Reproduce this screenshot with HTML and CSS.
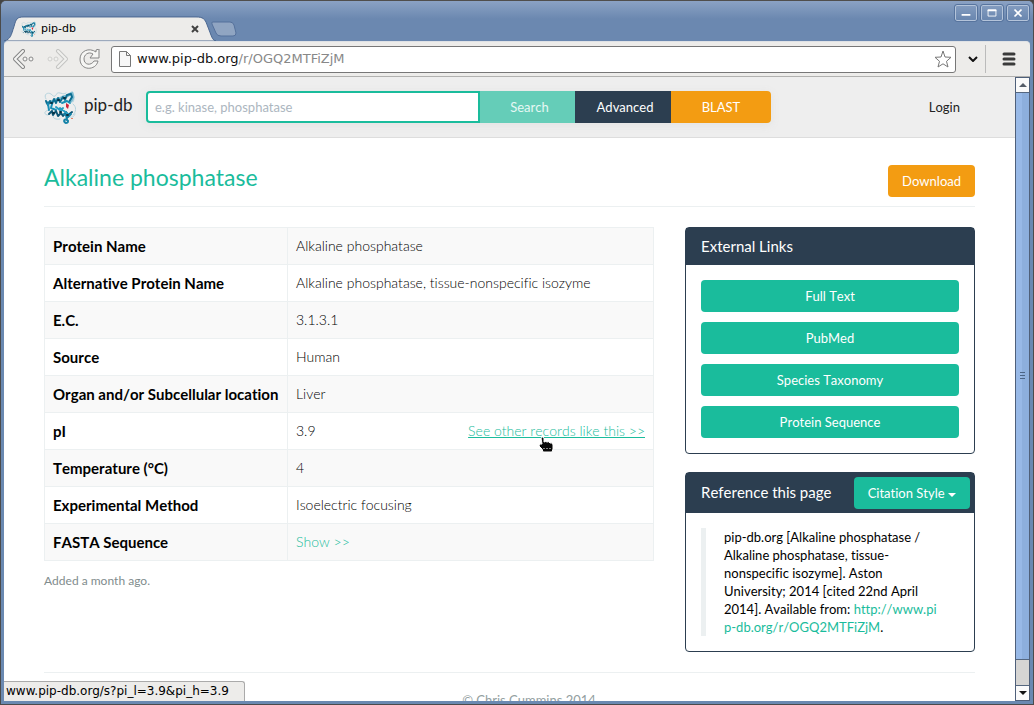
FILE: index.html
```
<!DOCTYPE html>
<html lang="en">
<head>
<meta charset="utf-8">
<title>pip-db</title>
<link rel="stylesheet" href="styles.css">
</head>
<body>
<svg class="defs" aria-hidden="true">
  <symbol id="protein" viewBox="0 0 32 34">
    <g fill="none" stroke-linecap="round" stroke-linejoin="round">
      <path d="M2 9C-1 4 4 2 7 4s2 3 4 2 1-4 5-3 4 1 6 0M27 6c3-1 4 3 2 6M29 14c4 3 3 8 0 11M5 20c-6 1-5 5-1 5M10 25c-3 3 2 5 6 4M26 27c3 1 4-1 5-3" stroke="#b5d3dd" stroke-width="1"/>
      <path d="M3 13l4-1 4-2 4-1 4-2 4-1 5-3 1 4-2 4" stroke="#7fbdd2" stroke-width="3"/>
      <path d="M2 11l2 4 2-4 2 3 2-5 2 4 2-5 2 4 3-5 2 3 2-5 4-1 1 3-3 5" stroke="#0c6e92" stroke-width="2"/>
      <path d="M4 14l1 6M8 14l-1 4 5 2M18 13l5-2 3 2" stroke="#1a8fb6" stroke-width="2"/>
      <path d="M5 24l3-3 1 4 3-4 2 5 3-3 2 3 3-4 2 3 4-3" stroke="#0b5474" stroke-width="2"/>
      <path d="M12 17l5 4 2-3M16 18l8 6" stroke="#249cc2" stroke-width="2"/>
      <path d="M20 24l4 3 3-3M22 25l1 4M23 30c-3-2-4 2-1 3 2 0 3-2 1-3" stroke="#1583a8" stroke-width="2"/>
      <path d="M7 13h1M14 10h1M20 8h1M9 23h1M16 22h1M23 25h1" stroke="#083345" stroke-width="2"/>
    </g>
    <path d="M22 13l3 2-1 4-2-2z" fill="#d1243a"/><path d="M27 28h2v1h-2z" fill="#e98267"/>
  </symbol>
</svg>
<div class="window">
  <header class="titlebar">
    <div class="tab">
      <svg class="tab-shape" viewBox="0 0 212 26" preserveAspectRatio="none"><path d="M0 26C7 24 7 20 10 11C12 3 13 1 20 1H192C199 1 201 3 203 9C208 22 208 25 212 26Z" fill="#edecea" stroke="#496690"/></svg>
      <svg class="favicon"><use href="#protein"/></svg>
      <span class="tab-title">pip-db</span>
      <button class="tab-close" aria-label="Close tab"><svg viewBox="0 0 8 8"><path d="M1 1l6 6M7 1L1 7" stroke="#414141" stroke-width="2"/></svg></button>
    </div>
    <button class="new-tab" aria-label="New tab"><svg viewBox="0 0 26 16"><path d="M2 1h17q3 0 4 3l2 8q0 3-3 3H10q-4 0-5-3L1 3q-1-2 1-2z" fill="#90a5c2" stroke="#55719b"/></svg></button>
    <div class="window-buttons">
      <button aria-label="Minimize"><svg viewBox="0 0 22 16"><path d="M6 9h10v2H6z" fill="#fff"/></svg></button>
      <button aria-label="Maximize"><svg viewBox="0 0 22 16"><path d="M6.500 4.500h9v7h-9z" fill="none" stroke="#fff"/><path d="M6 4h10v2H6z" fill="#fff"/></svg></button>
      <button aria-label="Close"><svg viewBox="0 0 22 16"><path d="M7 4l8 8M15 4l-8 8" stroke="#fff" stroke-width="2"/></svg></button>
    </div>
  </header>
  <nav class="toolbar" aria-label="Browser">
    <button class="tool" aria-label="Back"><svg viewBox="0 0 22 20"><path d="M10 2L2 10l8 8" fill="none" stroke="#858585" stroke-width="4" stroke-linejoin="round" stroke-linecap="round"/><path d="M10 2L2 10l8 8" fill="none" stroke="#f4f4f2" stroke-width="2" stroke-linecap="round"/><g fill="#f4f4f2" stroke="#8a8a8a"><circle cx="12" cy="10" r="2"/><circle cx="18" cy="10" r="2"/></g></svg></button>
    <button class="tool" aria-label="Forward"><svg viewBox="0 0 22 20"><path d="M12 2l8 8-8 8" fill="none" stroke="#c4c4c2" stroke-width="4" stroke-linejoin="round" stroke-linecap="round"/><path d="M12 2l8 8-8 8" fill="none" stroke="#f0f0ee" stroke-width="2" stroke-linecap="round"/><g fill="#f0f0ee" stroke="#cfcfcd"><circle cx="4" cy="10" r="2"/><circle cx="10" cy="10" r="2"/></g></svg></button>
    <button class="tool" aria-label="Reload"><svg viewBox="0 0 22 20"><path d="M17 1l3-1v9h-9l3-4C9 2 5 6 5 10c0 6 7 7 10 2h4C17 22 1 22 1 10 1 2 10-2 17 3z" fill="#f6f6f4" stroke="#858585" stroke-linejoin="round"/></svg></button>
    <div class="address">
      <svg class="page-icon" viewBox="0 0 12 16"><path d="M.5.500h7l4 4v11H.5z" fill="#f6f6f6" stroke="#777"/><path d="M7.500.500v4h4" fill="none" stroke="#777"/></svg>
      <a class="url" href="#">www.pip-db.org<span>/r/OGQ2MTFiZjM</span></a>
      <button class="star" aria-label="Bookmark"><svg viewBox="0 0 18 18"><path d="M9 1l2 6 6 .3-4.500 4L14 17l-5-3.200L4 17l1.500-5.700L1 7.300 7 7z" fill="#fff" stroke="#777" stroke-linejoin="round"/></svg></button>
    </div>
    <button class="chevron" aria-label="More"><svg viewBox="0 0 10 6"><path d="M1 1l4 4 4-4" fill="none" stroke="#111" stroke-width="2"/></svg></button>
    <button class="menu" aria-label="Menu"><svg viewBox="0 0 14 14"><path d="M2 2h10M2 7h10M2 12h10" stroke="#3a3a3a" stroke-width="3" stroke-linecap="round"/></svg></button>
  </nav>
  <div class="viewport">
    <div class="page">
      <header class="navbar">
        <a class="brand" href="#"><svg class="logo"><use href="#protein"/></svg><span>pip-db</span></a>
        <form class="search">
          <input type="text" aria-label="Search proteins" placeholder="e.g. kinase, phosphatase">
          <button type="button" class="go">Search</button>
          <button type="button" class="advanced">Advanced</button>
          <button type="button" class="blast">BLAST</button>
        </form>
        <a class="login" href="#">Login</a>
      </header>
      <main class="container">
        <div class="heading">
          <h1>Alkaline phosphatase</h1>
          <button class="btn download">Download</button>
        </div>
        <div class="columns">
          <section>
            <table class="record">
              <tr><th scope="row">Protein Name</th><td>Alkaline phosphatase</td></tr>
              <tr><th scope="row">Alternative Protein Name</th><td>Alkaline phosphatase, tissue-nonspecific isozyme</td></tr>
              <tr><th scope="row">E.C.</th><td>3.1.3.1</td></tr>
              <tr><th scope="row">Source</th><td>Human</td></tr>
              <tr><th scope="row">Organ and/or Subcellular location</th><td>Liver</td></tr>
              <tr><th scope="row">pI</th><td><div class="split"><span>3.9</span><a class="similar" href="#">See other records like this &gt;&gt;<svg class="pointer" viewBox="0 0 16 17"><path d="M3 2q2-2 3 0v4q2-1 3 0 2-1 3 1 3-1 3 2v4l-1 3H5l-1-3-3-3q0-3 3-2z" fill="#080808" stroke="#fff"/><path d="M6 12v1M9 12v1M12 12v1" stroke="#fff"/></svg></a></div></td></tr>
              <tr><th scope="row">Temperature (°C)</th><td>4</td></tr>
              <tr><th scope="row">Experimental Method</th><td>Isoelectric focusing</td></tr>
              <tr><th scope="row">FASTA Sequence</th><td><a href="#">Show &gt;&gt;</a></td></tr>
            </table>
            <p class="added">Added a month ago.</p>
          </section>
          <aside>
            <section class="panel">
              <div class="panel-head"><h2>External Links</h2></div>
              <div class="panel-body links">
                <button class="btn">Full Text</button>
                <button class="btn">PubMed</button>
                <button class="btn">Species Taxonomy</button>
                <button class="btn">Protein Sequence</button>
              </div>
            </section>
            <section class="panel">
              <div class="panel-head with-button"><h2>Reference this page</h2><button class="btn">Citation Style <svg class="caret" viewBox="0 0 8 4"><path d="M0 0h8L4 4z" fill="#fff"/></svg></button></div>
              <div class="panel-body"><blockquote>pip-db.org [Alkaline phosphatase / Alkaline phosphatase, tissue-nonspecific isozyme]. Aston University; 2014 [cited 22nd April 2014]. Available from: <a href="#">http://www.pi<wbr>p-db.org/r/OGQ2MTFiZjM</a>.</blockquote></div>
            </section>
          </aside>
        </div>
        <footer>© Chris Cummins 2014</footer>
      </main>
    </div>
    <div class="scrollbar">
      <button aria-label="Scroll up"><svg viewBox="0 0 8 4"><path d="M0 4h8L4 0z" fill="#555d68"/></svg></button>
      <div class="thumb"><svg viewBox="0 0 5 8"><path d="M0 .5h5M0 3.500h5M0 6.500h5" stroke="#4b6485"/></svg></div>
      <div class="track"></div>
      <button aria-label="Scroll down"><svg viewBox="0 0 8 4"><path d="M0 0h8L4 4z" fill="#111"/></svg></button>
    </div>
    <div class="status">www.pip-db.org/s?pi_l=3.9&amp;pi_h=3.9</div>
  </div>
</div>
</body>
</html>
```
FILE: styles.css
```
* { box-sizing: border-box; }
body {
  margin: 0;
  background: #444;
  color: #000;
  font: 13px/18px Lato, sans-serif;
  font-kerning: none;
  font-variant-ligatures: none;
}
button {
  margin: 0;
  padding: 0;
  border: 0;
  background: none;
  color: inherit;
  font: inherit;
  font-kerning: none;
}
svg { display: block; }
.defs { position: absolute; width: 0; height: 0; }
a { color: #1abc9c; text-decoration: none; }

.window {
  display: flex;
  flex-direction: column;
  height: 100vh;
  padding: 0 2px 2px;
  border: 1px solid #4b4b4b;
  border-top-color: #504e4c;
  border-radius: 6px 6px 0 0;
  background: #6a89b1;
  overflow: hidden;
}
.titlebar {
  display: flex;
  align-items: flex-end;
  height: 40px;
  margin: 0 -2px;
  padding-left: 3px;
  background: linear-gradient(#8ba2c4, #6b88b0 18px);
  flex: none;
}
.tab {
  display: flex;
  align-items: center;
  position: relative;
  width: 212px;
  height: 25px;
  padding: 0 17px;
}
.tab-shape { position: absolute; left: 0; top: 0; width: 100%; height: 100%; }
.favicon { position: relative; width: 16px; height: 16px; }
.tab-title { position: relative; flex: 1; margin-left: 4px; font: 11px/16px "DejaVu Sans", sans-serif; }
.tab-close { position: relative; }
.tab-close svg { width: 8px; height: 8px; }
.new-tab { margin-left: -5px; padding: 0 0 4px; }
.new-tab svg { width: 26px; height: 16px; }
.window-buttons { display: flex; gap: 4px; margin: 0 4px 20px auto; }
.window-buttons button { border: 1px solid #b4c4da; border-radius: 2px; outline: 1px solid #57749e; }
.window-buttons svg { width: 20px; height: 14px; }

.toolbar {
  display: flex;
  align-items: center;
  flex: none;
  height: 36px;
  padding: 0 14px 0 9px;
  margin: 0 1px;
  border-top: 1px solid #dfe2e6;
  border-bottom: 1px solid #b1b1af;
  border-radius: 4px 4px 0 0;
  background: #edecea;
}
.tool { margin-right: 11px; }
.tool svg { width: 22px; height: 20px; }
.tool:nth-child(3) { margin-right: 10px; }
.address {
  display: flex;
  align-items: center;
  flex: 1;
  height: 27px;
  padding: 0 3px 0 7px;
  border: 1px solid #777;
  border-radius: 3px;
  background: #fff;
}
.page-icon { width: 12px; height: 16px; }
.url { flex: 1; margin-left: 6px; color: #111; font: 13px/18px "DejaVu Sans", sans-serif; }
.url span { color: #888; }
.star svg { width: 18px; height: 18px; }
.chevron { padding: 0 7px 0 12px; }
.chevron svg { width: 10px; height: 6px; }
.menu { padding: 7px 0 7px 16px; border-left: 1px solid #bbb; }
.menu svg { width: 14px; height: 14px; }

.viewport {
  display: flex;
  flex: 1;
  min-height: 0;
  position: relative;
  margin: 0 1px 1px;
  background: #fff;
}
.page { flex: 1; min-width: 0; overflow: hidden; }
.scrollbar {
  display: flex;
  flex-direction: column;
  width: 15px;
  border: 1px solid #4f607a;
  background: #d6d5d3;
}
.scrollbar button { display: grid; place-items: center; height: 14px; background: #fafafa; }
.scrollbar button svg { width: 8px; height: 4px; }
.thumb {
  display: grid;
  place-items: center;
  flex: 1;
  border: 1px solid #55677f;
  border-width: 1px 0;
  background: linear-gradient(90deg, #98b9e7 50%, #8dafdd 50%);
}
.thumb svg { width: 5px; height: 8px; }
.track { height: 26px; border-bottom: 1px solid #55677f; }

.navbar {
  display: flex;
  align-items: center;
  height: 61px;
  padding: 0 55px 0 40px;
  border-bottom: 1px solid #ddd;
  background: #eee;
}
.brand { display: flex; align-items: center; gap: 8px; width: 102px; color: #222; font-size: 17px; line-height: 24px; }
.brand span { padding-bottom: 4px; }
.logo { width: 32px; height: 34px; }
.search { display: flex; width: 625px; height: 32px; border-radius: 4px; box-shadow: 0 2px 10px #e2e2e2; }
.search input {
  flex: 1;
  min-width: 0;
  padding: 0 7px;
  border: 2px solid #1abc9c;
  border-radius: 4px 0 0 4px;
  background: #fff;
  font: inherit;
}
.search input::placeholder { color: #acb6c0; opacity: 1; }
.search button { width: 96px; color: #fff; }
.search .go { width: 95px; padding-left: 4px; background: #65cdb8; color: #e6f8f4; }
.search .advanced { padding-left: 4px; background: #2c3e50; }
.search .blast { width: 100px; border-radius: 0 4px 4px 0; background: #f39c12; }
.login { margin-left: auto; color: #222; }

.container { padding: 27px 40px 0; }
.heading {
  display: flex;
  align-items: flex-start;
  justify-content: space-between;
  height: 42px;
  border-bottom: 1px solid #ecf0f1;
}
h1 { margin: 0; color: #1abc9c; font-size: 23px; font-weight: 400; line-height: 24px; }
.btn { height: 32px; padding: 0 14px; border-radius: 4px; background: #1abc9c; color: #fff; }
.download { background: #f39c12; }
.columns { display: grid; grid-template-columns: minmax(0, 1fr) 290px; gap: 31px; padding-top: 20px; }
.record { width: 100%; border-collapse: collapse; font-size: 14px; line-height: 20px; }
.record th, .record td { height: 37px; padding: 8px; border: 1px solid #ecf0f1; }
.record th { width: 243px; font-size: 15px; text-align: left; white-space: nowrap; }
.record td { font-weight: 300; }
.record tr:nth-child(odd) { background: #f9f9f9; }
.split { display: flex; justify-content: space-between; }
.similar { position: relative; text-decoration: underline; }
.pointer { position: absolute; left: 70px; top: 15px; width: 16px; height: 17px; }
.added { margin: 11px 0 0; color: #7f8c8d; font-size: 12px; }

.panel { margin-bottom: 18px; border: 1px solid #2c3e50; border-radius: 4px; }
.panel-head { display: flex; align-items: center; height: 37px; padding: 0 15px; background: #2c3e50; color: #fff; }
.panel-head.with-button { justify-content: space-between; height: 40px; padding-right: 4px; }
h2 { margin: 0; padding-bottom: 2px; font-size: 15px; font-weight: 400; line-height: 20px; }
.caret { display: inline-block; width: 8px; height: 4px; vertical-align: middle; }
.panel-body { padding: 15px; }
.links { display: grid; gap: 10px; }
blockquote { margin: 0; padding: 0 18px; border-left: 5px solid #ecf0f1; }
footer { margin-top: 2px; padding: 18px 0 0 39px; border-top: 1px solid #ecf0f1; color: #93a09f; text-align: center; }
.status {
  position: absolute;
  left: 0;
  bottom: 0;
  min-width: 241px;
  height: 20px;
  padding: 0 4px 0 2px;
  border: 1px solid #aaa;
  border-width: 1px 1px 0 0;
  border-radius: 0 3px 0 0;
  background: #edecea;
  font: 12px/19px "DejaVu Sans", sans-serif;
}
```
